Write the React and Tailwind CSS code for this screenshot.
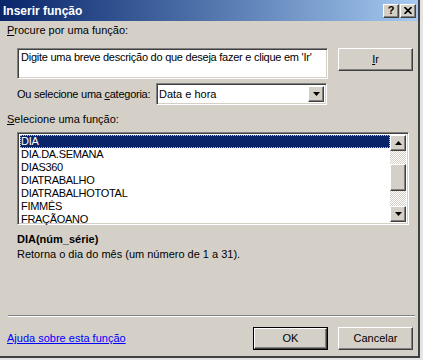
import React from "react";

const raised =
  "border border-t-white border-l-white border-r-[#404040] border-b-[#404040] shadow-[inset_-1px_-1px_0_#808080,inset_1px_1px_0_#d4d0c8] bg-[#d4d0c8]";
const sunken =
  "border border-t-[#808080] border-l-[#808080] border-r-white border-b-white shadow-[inset_1px_1px_0_#404040,inset_-1px_-1px_0_#d4d0c8]";

const funcs = ["DIA", "DIA.DA.SEMANA", "DIAS360", "DIATRABALHO", "DIATRABALHOTOTAL", "FIMMÊS", "FRAÇÃOANO"];

function Arrow({ up }) {
  return (
    <svg width="7" height="4" viewBox="0 0 7 4">
      {up ? <path d="M3.5 0 L7 4 L0 4 Z" fill="#000" /> : <path d="M0 0 L7 0 L3.5 4 Z" fill="#000" />}
    </svg>
  );
}

export default function App() {
  return (
    <div className="w-[423px] h-[360px] bg-[#e4e4e4] font-['Liberation_Sans',Arial,sans-serif] text-[11px] text-black">
      <div className="w-[420px] h-[358px] bg-[#d4d0c8] border-r-2 border-b-2 border-r-[#404040] border-b-[#404040] flex flex-col">
        {/* barra de título */}
        <div className="h-[21px] flex items-center justify-between pl-[3px] pr-[2px] bg-gradient-to-r from-[#0a246a] to-[#a6caf0]">
          <span className="text-white font-bold text-[12px] leading-none">Inserir função</span>
          <div className="flex gap-[1px]">
            <div className={`${raised} w-[16px] h-[14px] flex items-center justify-center font-bold text-[11px] leading-none`}>?</div>
            <div className={`${raised} w-[16px] h-[14px] flex items-center justify-center`}>
              <svg width="8" height="7" viewBox="0 0 8 7">
                <path d="M0.5 0 L7.5 7 M7.5 0 L0.5 7" stroke="#000" strokeWidth="1.6" />
              </svg>
            </div>
          </div>
        </div>

        <div className="flex flex-col pl-[7px] pr-[5px]">
          <div className="mt-[3px] leading-[13px]">
            <span className="underline">P</span>rocure por uma função:
          </div>

          <div className="mt-[11px] ml-[10px] flex items-start gap-[10px]">
            <div className={`${sunken} bg-white w-[311px] h-[31px] px-[3px] pt-[2px] leading-[13px] whitespace-nowrap overflow-hidden tracking-[-0.25px] shrink-0`}>
              Digite uma breve descrição do que deseja fazer e clique em 'Ir'
            </div>
            <div className={`${raised} w-[75px] h-[23px] flex items-center justify-center shrink-0`}>
              <span className="underline">I</span>r
            </div>
          </div>

          <div className="mt-[4px] ml-[10px] flex items-center h-[22px]">
            <span className="w-[139px] shrink-0 whitespace-nowrap tracking-[-0.25px]">
              Ou selecione uma <span className="underline">c</span>ategoria:
            </span>
            <div className={`${sunken} bg-white w-[171px] h-[22px] flex items-center justify-between pl-[2px] pr-[2px] shrink-0`}>
              <span>Data e hora</span>
              <div className={`${raised} w-[16px] h-[16px] flex items-center justify-center`}>
                <Arrow />
              </div>
            </div>
          </div>

          <div className="mt-[8px] leading-[13px]">
            <span className="underline">S</span>elecione uma função:
          </div>

          <div className={`${sunken} bg-white mt-[6px] ml-[10px] w-[392px] h-[93px] flex p-[2px]`}>
            <div className="flex-1 flex flex-col tracking-[-0.3px]">
              {funcs.map((f, i) => (
                <div
                  key={f}
                  className={
                    i === 0
                      ? "h-[13px] leading-[13px] pl-[1px] bg-[#0a246a] text-white outline-1 outline-dotted outline-offset-[-1px] outline-[#c0c0c0]"
                      : "h-[13px] leading-[13px] pl-[1px]"
                  }
                >
                  {f}
                </div>
              ))}
            </div>
            <div className="w-[16px] flex flex-col bg-[image:repeating-conic-gradient(#ffffff_0%_25%,#d4d0c8_0%_50%)] bg-size-[2px_2px]">
              <div className={`${raised} h-[16px] flex items-center justify-center`}>
                <Arrow up />
              </div>
              <div className="h-[13px]" />
              <div className={`${raised} h-[27px]`} />
              <div className="flex-1" />
              <div className={`${raised} h-[16px] flex items-center justify-center`}>
                <Arrow />
              </div>
            </div>
          </div>

          <div className="mt-[8px] ml-[10px] font-bold leading-[13px]">DIA(núm_série)</div>
          <div className="mt-[2px] ml-[10px] leading-[13px]">Retorna o dia do mês (um número de 1 a 31).</div>

          <div className="mt-[54px] ml-[1px] mr-[-2px] border-t border-t-[#808080] border-b border-b-white" />

          <div className="mt-[10px] flex items-center">
            <span className="text-[#0000ff] underline">Ajuda sobre esta função</span>
            <div className="ml-auto flex gap-[10px]">
              <div className="border border-black">
                <div className={`${raised} w-[73px] h-[21px] flex items-center justify-center`}>OK</div>
              </div>
              <div className={`${raised} w-[75px] h-[23px] flex items-center justify-center`}>Cancelar</div>
            </div>
          </div>
        </div>
      </div>
    </div>
  );
}
